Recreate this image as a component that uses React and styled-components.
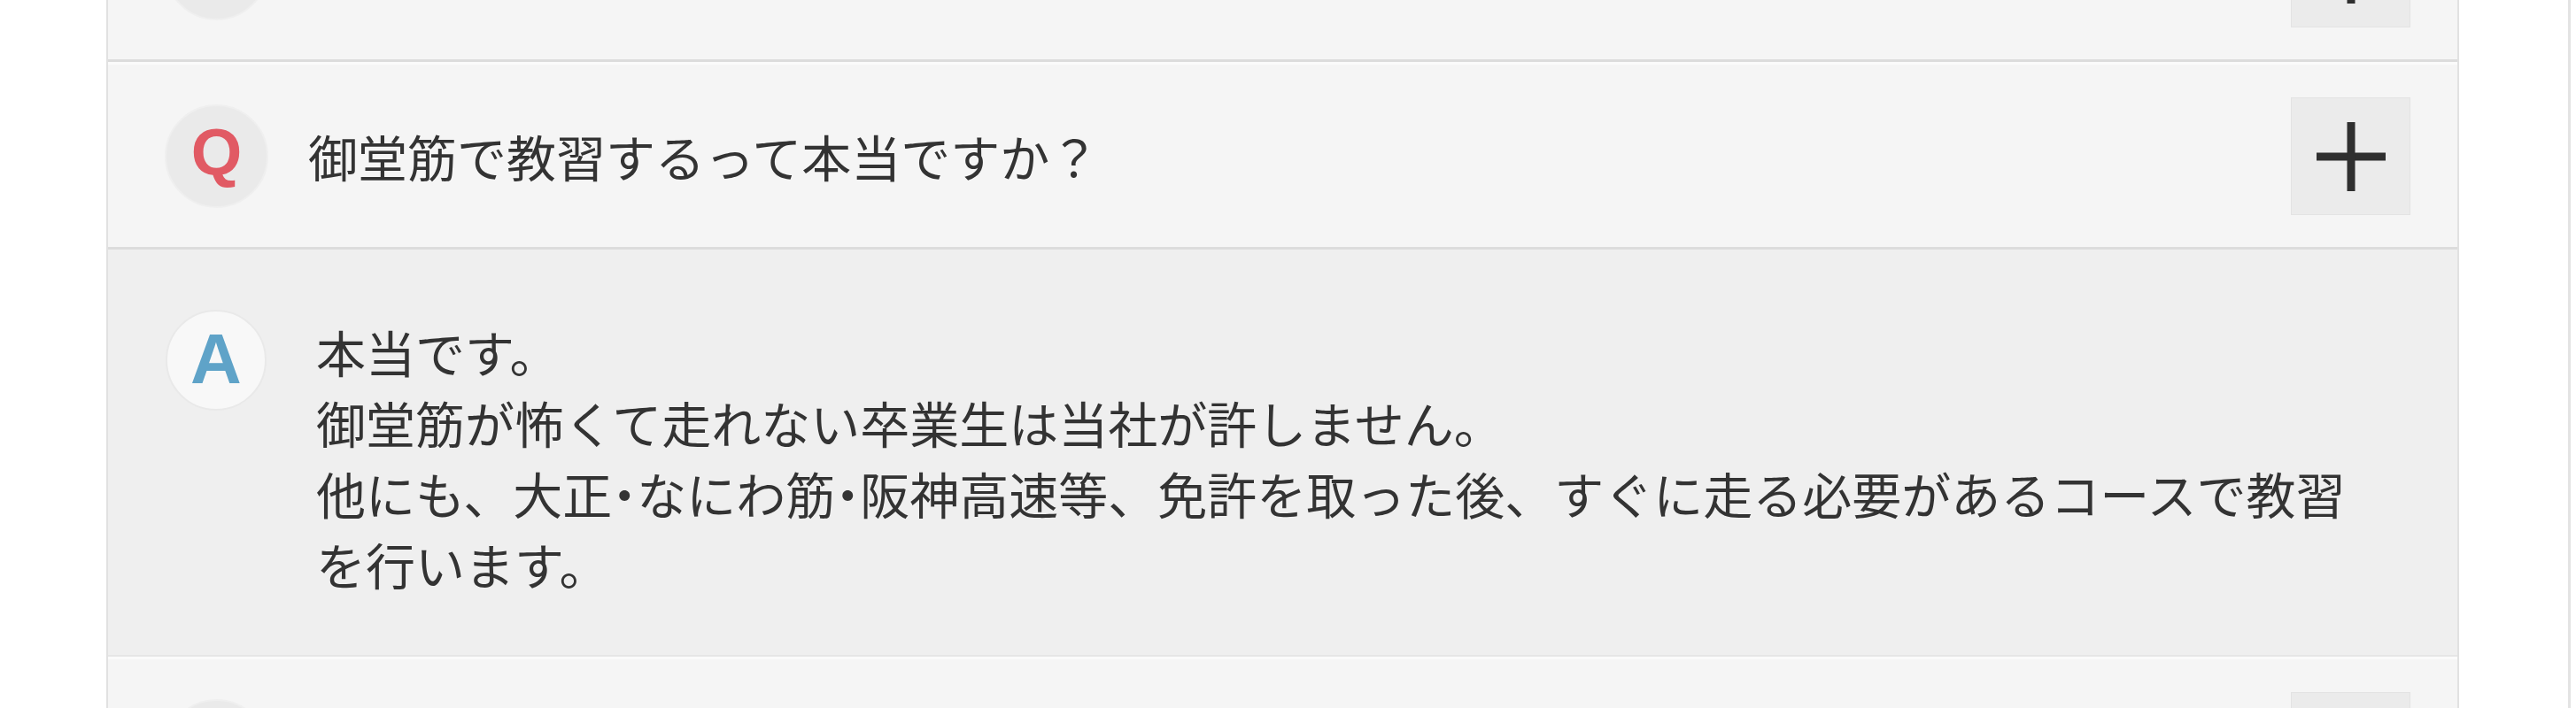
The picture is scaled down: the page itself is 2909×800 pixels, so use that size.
import styled, { createGlobalStyle } from 'styled-components';

const GlobalStyle = createGlobalStyle`
  html,
  body {
    margin: 0;
    padding: 0;
    overflow: hidden;
    background: #ffffff;
  }

  body {
    font-family: "Noto Sans CJK JP", "Noto Sans", sans-serif;
    color: #333333;
  }
`;

const Page = styled.div`
  display: flex;
  height: 800px;
  padding: 0 6px 0 120px;
  box-sizing: border-box;
  overflow: hidden;
`;

const FaqPanel = styled.div`
  width: 2657px;
  flex-shrink: 0;
  align-self: flex-start;
  margin-top: -142px;
  box-sizing: border-box;
  border-left: 2px solid #e1e1e1;
  border-right: 2px solid #e1e1e1;
  background: #f5f5f5;
`;

const WindowEdge = styled.div`
  width: 3px;
  margin-left: auto;
  background: #e3e3e3;
`;

const QuestionRow = styled.div`
  display: flex;
  align-items: center;
  gap: 45px;
  padding: 37px 53px 36px 64px;
  border-top: 3px solid #fbfbfb;
  border-bottom: 3px solid #dcdcdc;
  background: #f5f5f5;
`;

const Badge = styled.span`
  flex-shrink: 0;
  display: flex;
  align-items: center;
  justify-content: center;
  box-sizing: border-box;
  border-radius: 50%;
  font-family: "Liberation Sans", Arial, sans-serif;
  font-weight: 700;
  line-height: 1;
  width: ${(p) => (p.$kind === 'q' ? '117px' : '114px')};
  height: ${(p) => (p.$kind === 'q' ? '117px' : '114px')};
  padding-bottom: ${(p) => (p.$kind === 'q' ? '10px' : '2px')};
  background: ${(p) => (p.$kind === 'q' ? '#eaeaea' : '#f8f8f8')};
  border: 2px solid ${(p) => (p.$kind === 'q' ? '#efefef' : '#e9e9e9')};
  color: ${(p) => (p.$kind === 'q' ? '#e15a64' : '#5fa3c8')};
  font-size: ${(p) => (p.$kind === 'q' ? '74px' : '80px')};
`;

const QuestionText = styled.p`
  flex: 1;
  margin: 0;
  font-size: 56px;
  line-height: 1.4;
  color: #333333;
`;

const ToggleButton = styled.button`
  flex-shrink: 0;
  display: flex;
  align-items: center;
  justify-content: center;
  width: 135px;
  height: 133px;
  padding: 0;
  box-sizing: border-box;
  border: 1px solid #e3e3e3;
  background: #ebebeb;
  cursor: pointer;
`;

const AnswerBlock = styled.div`
  display: flex;
  align-items: flex-start;
  gap: 56px;
  padding: 68px 88px 63px 65px;
  background: #efefef;
  border-bottom: 2px solid #e6e6e6;
`;

const AnswerText = styled.p`
  flex: 1;
  margin: 7px 0 0;
  font-size: 56px;
  line-height: 80px;
  color: #333333;
`;

const HalfDot = styled.span`
  font-feature-settings: "halt";
`;

const PlusIcon = () => (
  <svg width="78" height="78" viewBox="0 0 78 78" aria-hidden="true">
    <rect x="0" y="34.5" width="78" height="9" fill="#2f2f2f" />
    <rect x="34.5" y="0" width="9" height="78" fill="#2f2f2f" />
  </svg>
);

const FaqQuestion = ({ children }) => (
  <QuestionRow>
    <Badge $kind="q">Q</Badge>
    <QuestionText>{children}</QuestionText>
    <ToggleButton type="button" aria-label="開く">
      <PlusIcon />
    </ToggleButton>
  </QuestionRow>
);

export default function App() {
  return (
    <>
      <GlobalStyle />
      <Page>
        <FaqPanel>
          <FaqQuestion>教習はどのくらいの期間で終わりますか？</FaqQuestion>
          <FaqQuestion>御堂筋で教習するって本当ですか？</FaqQuestion>
          <AnswerBlock>
            <Badge $kind="a">A</Badge>
            <AnswerText>
              本当です。
              <br />
              御堂筋が怖くて走れない卒業生は当社が許しません。
              <br />
              他にも、大正<HalfDot>・</HalfDot>なにわ筋<HalfDot>・</HalfDot>
              阪神高速等、免許を取った後、すぐに走る必要があるコースで教習を行います。
            </AnswerText>
          </AnswerBlock>
          <FaqQuestion>教習車はどんな車を使っていますか？</FaqQuestion>
        </FaqPanel>
        <WindowEdge />
      </Page>
    </>
  );
}
